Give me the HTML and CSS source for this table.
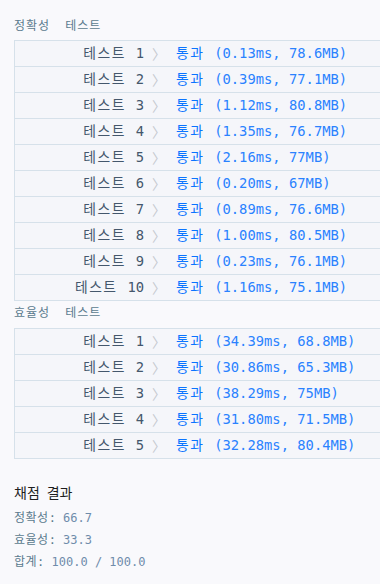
FILE: index.html
```html
<!DOCTYPE html>
<html lang="ko">
<head>
<meta charset="utf-8">
<link rel="stylesheet" href="styles.css">
</head>
<body>
<div class="page">
  <div class="title first"><span class="ko">정확성</span><span class="ko">테스트</span></div>
  <div class="table">
    <div class="row"><span class="name"><span class="ko">테스트 </span>1</span><span class="arrow">〉</span><span class="res"><span class="ko">통과 </span>(0.13ms, 78.6MB)</span></div>
    <div class="row"><span class="name"><span class="ko">테스트 </span>2</span><span class="arrow">〉</span><span class="res"><span class="ko">통과 </span>(0.39ms, 77.1MB)</span></div>
    <div class="row"><span class="name"><span class="ko">테스트 </span>3</span><span class="arrow">〉</span><span class="res"><span class="ko">통과 </span>(1.12ms, 80.8MB)</span></div>
    <div class="row"><span class="name"><span class="ko">테스트 </span>4</span><span class="arrow">〉</span><span class="res"><span class="ko">통과 </span>(1.35ms, 76.7MB)</span></div>
    <div class="row"><span class="name"><span class="ko">테스트 </span>5</span><span class="arrow">〉</span><span class="res"><span class="ko">통과 </span>(2.16ms, 77MB)</span></div>
    <div class="row"><span class="name"><span class="ko">테스트 </span>6</span><span class="arrow">〉</span><span class="res"><span class="ko">통과 </span>(0.20ms, 67MB)</span></div>
    <div class="row"><span class="name"><span class="ko">테스트 </span>7</span><span class="arrow">〉</span><span class="res"><span class="ko">통과 </span>(0.89ms, 76.6MB)</span></div>
    <div class="row"><span class="name"><span class="ko">테스트 </span>8</span><span class="arrow">〉</span><span class="res"><span class="ko">통과 </span>(1.00ms, 80.5MB)</span></div>
    <div class="row"><span class="name"><span class="ko">테스트 </span>9</span><span class="arrow">〉</span><span class="res"><span class="ko">통과 </span>(0.23ms, 76.1MB)</span></div>
    <div class="row"><span class="name"><span class="ko">테스트 </span>10</span><span class="arrow">〉</span><span class="res"><span class="ko">통과 </span>(1.16ms, 75.1MB)</span></div>
  </div>
  <div class="title second"><span class="ko">효율성</span><span class="ko">테스트</span></div>
  <div class="table">
    <div class="row"><span class="name"><span class="ko">테스트 </span>1</span><span class="arrow">〉</span><span class="res"><span class="ko">통과 </span>(34.39ms, 68.8MB)</span></div>
    <div class="row"><span class="name"><span class="ko">테스트 </span>2</span><span class="arrow">〉</span><span class="res"><span class="ko">통과 </span>(30.86ms, 65.3MB)</span></div>
    <div class="row"><span class="name"><span class="ko">테스트 </span>3</span><span class="arrow">〉</span><span class="res"><span class="ko">통과 </span>(38.29ms, 75MB)</span></div>
    <div class="row"><span class="name"><span class="ko">테스트 </span>4</span><span class="arrow">〉</span><span class="res"><span class="ko">통과 </span>(31.80ms, 71.5MB)</span></div>
    <div class="row"><span class="name"><span class="ko">테스트 </span>5</span><span class="arrow">〉</span><span class="res"><span class="ko">통과 </span>(32.28ms, 80.4MB)</span></div>
  </div>
  <div class="heading">채점 결과</div>
  <div class="summary">
    <div class="line"><span class="label ko">정확성</span><span class="label">:</span> <span class="val">66.7</span></div>
    <div class="line"><span class="label ko">효율성</span><span class="label">:</span> <span class="val">33.3</span></div>
    <div class="line"><span class="label ko">합계</span><span class="label">:</span> <span class="val">100.0 / 100.0</span></div>
  </div>
</div>
</body>
</html>
```

FILE: styles.css
```css
html, body {
  margin: 0;
  padding: 0;
  background: #f9f9fc;
}
.page {
  padding-left: 14px;
  font-family: "DejaVu Sans Mono", "Noto Sans CJK KR", monospace;
}
.title {
  display: flex;
  gap: 15px;
  font-size: 12px;
  line-height: 16px;
  color: #5b7b8e;
}
.title .ko {
  letter-spacing: 1px;
}
.title.first {
  margin-top: 18px;
  margin-bottom: 6px;
}
.title.second {
  margin-top: 4px;
  margin-bottom: 7px;
}
.table {
  border-top: 1px solid #d6e1ea;
  border-left: 1px solid #d6e1ea;
  background: #f5f6fa;
}
.row {
  display: flex;
  align-items: center;
  height: 25px;
  border-bottom: 1px solid #d6e1ea;
  font-size: 13.8px;
  line-height: 20px;
  white-space: pre;
}
.row .ko {
  letter-spacing: 1.5px;
}
.name {
  width: 129px;
  text-align: right;
  color: #44576c;
  margin-top: -2px;
}
.arrow {
  margin-left: 8px;
  width: 15px;
  color: #c4c8ce;
  font-family: "Noto Sans CJK KR", sans-serif;
  margin-top: -2px;
}
.res {
  margin-left: 9px;
  color: #2a82ff;
  margin-top: -2px;
}
.res .ko {
  color: #0a74ff;
}
.heading {
  margin-top: 23px;
  font-size: 14px;
  line-height: 20px;
  color: #1e1e1e;
  font-family: "Noto Sans CJK KR", sans-serif;
  word-spacing: 3px;
}
.summary {
  margin-top: 5px;
}
.line {
  font-size: 12px;
  line-height: 22px;
  white-space: pre;
}
.line .ko {
  letter-spacing: 0.5px;
}
.label {
  color: #5b7b8e;
}
.val {
  color: #6f8cab;
}
```
